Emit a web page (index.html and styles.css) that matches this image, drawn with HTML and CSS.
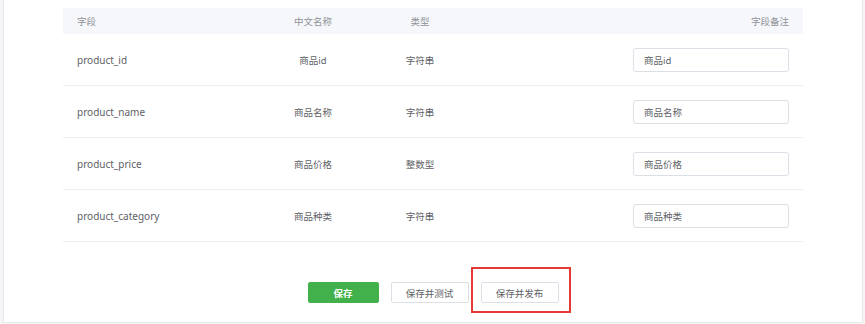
FILE: index.html
```html
<!DOCTYPE html>
<html lang="zh-CN">
<head>
  <meta charset="UTF-8" />
  <title>字段配置</title>
  <link rel="stylesheet" href="styles.css">
</head>
<body>
  <div class="card">
    <table class="fields">
      <colgroup>
        <col class="c-field">
        <col class="c-name">
        <col class="c-type">
        <col class="c-note">
      </colgroup>
      <thead>
        <tr>
          <th>字段</th>
          <th class="center">中文名称</th>
          <th class="center">类型</th>
          <th class="right">字段备注</th>
        </tr>
      </thead>
      <tbody>
        <tr>
          <td>product_id</td>
          <td class="center">商品id</td>
          <td class="center">字符串</td>
          <td class="right"><input class="note" type="text" value="商品id"></td>
        </tr>
        <tr>
          <td>product_name</td>
          <td class="center">商品名称</td>
          <td class="center">字符串</td>
          <td class="right"><input class="note" type="text" value="商品名称"></td>
        </tr>
        <tr>
          <td>product_price</td>
          <td class="center">商品价格</td>
          <td class="center">整数型</td>
          <td class="right"><input class="note" type="text" value="商品价格"></td>
        </tr>
        <tr>
          <td>product_category</td>
          <td class="center">商品种类</td>
          <td class="center">字符串</td>
          <td class="right"><input class="note" type="text" value="商品种类"></td>
        </tr>
      </tbody>
    </table>

    <div class="actions">
      <button class="btn btn-primary">保存</button>
      <button class="btn">保存并测试</button>
      <button class="btn marked">保存并发布</button>
    </div>
  </div>
</body>
</html>
```

FILE: styles.css
```css
html, body {
  margin: 0;
  padding: 0;
  background: #f5f6f8;
  font-family: "Noto Sans", "Noto Sans CJK SC", sans-serif;
  color: #606266;
}

body {
  padding: 0 2px 0 3px;
}

.card {
  background: #fff;
  border: 1px solid #e6e8eb;
  border-top: none;
  height: 323px;
  box-sizing: border-box;
  padding: 8px 59px 0;
}

/* field table */
.fields {
  width: 100%;
  border-collapse: collapse;
  table-layout: fixed;
  font-size: 9.5px;
}
.c-field { width: 190px; }
.c-name { width: 120px; }
.c-type { width: 94px; }

.fields th {
  background: #f5f7fa;
  color: #909399;
  font-weight: normal;
  height: 26px;
  padding: 0 14px;
  text-align: left;
}
.fields td {
  height: 51px;
  padding: 0 14px;
  border-bottom: 1px solid #ebeef5;
}
.fields td:first-child { font-size: 10px; }
.fields .center { text-align: center; padding: 0; }
.fields .right { text-align: right; }

.note {
  width: 156px;
  height: 24px;
  box-sizing: border-box;
  border: 1px solid #dcdfe6;
  border-radius: 3px;
  padding: 0 10px;
  font: inherit;
  color: #606266;
  vertical-align: middle;
}

/* bottom buttons */
.actions {
  display: flex;
  justify-content: center;
  gap: 12px;
  margin-top: 40px;
}

.btn {
  height: 21px;
  min-width: 78px;
  padding: 0 10px;
  border: 1px solid #dcdfe6;
  border-radius: 2px;
  background: #fff;
  color: #606266;
  font-family: inherit;
  font-size: 9.5px;
  cursor: pointer;
}
.btn-primary {
  min-width: 71px;
  background: #43b14b;
  border-color: #43b14b;
  color: #fff;
  font-weight: bold;
}

/* red highlight around the publish button */
.marked { position: relative; }
.marked::after {
  content: "";
  position: absolute;
  top: -16px;
  left: -11px;
  right: -13px;
  bottom: -11px;
  border: 2px solid #e53935;
  pointer-events: none;
}
```
